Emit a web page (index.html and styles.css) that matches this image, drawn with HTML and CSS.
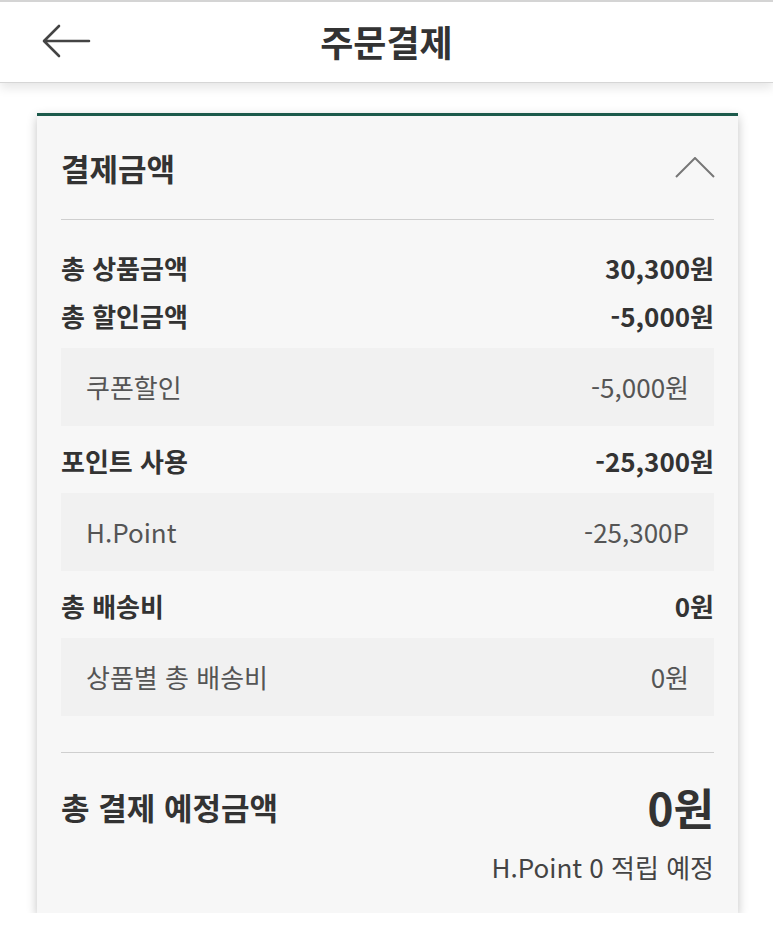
FILE: index.html
```html
<!DOCTYPE html>
<html lang="ko">
<head>
<meta charset="utf-8">
<link rel="stylesheet" href="styles.css">
</head>
<body>
<header class="topbar">
  <svg class="back" width="50" height="34" viewBox="0 0 50 34">
    <path d="M47 17 H3 M17 2 L2 17 L17 32" fill="none" stroke="#444" stroke-width="2.6" stroke-linecap="round" stroke-linejoin="round"/>
  </svg>
  <h1 class="title">주문결제</h1>
</header>
<main class="card">
  <div class="card-head">
    <span class="card-title">결제금액</span>
    <svg class="chev" width="40" height="22" viewBox="0 0 40 22">
      <path d="M1 20 L20 1 L39 20" fill="none" stroke="#777" stroke-width="2"/>
    </svg>
  </div>
  <div class="rows">
    <div class="row"><span>총 상품금액</span><span>30,300원</span></div>
    <div class="row"><span>총 할인금액</span><span>-5,000원</span></div>
    <div class="sub"><span>쿠폰할인</span><span>-5,000원</span></div>
    <div class="row after-sub"><span>포인트 사용</span><span>-25,300원</span></div>
    <div class="sub"><span>H.Point</span><span>-25,300P</span></div>
    <div class="row after-sub"><span>총 배송비</span><span>0원</span></div>
    <div class="sub"><span>상품별 총 배송비</span><span>0원</span></div>
  </div>
  <div class="total">
    <div class="total-row"><span class="total-label">총 결제 예정금액</span><span class="total-value">0원</span></div>
    <div class="earn">H.Point 0 적립 예정</div>
  </div>
</main>
</body>
</html>
```
FILE: styles.css
```css
* { box-sizing: border-box; }
body {
  margin: 0;
  background: #fff;
  font-family: "Noto Sans CJK KR", "Noto Sans", sans-serif;
  color: #333;
}
.topbar {
  position: relative;
  height: 83px;
  border-top: 2px solid #d4d4d4;
  border-bottom: 1px solid #d6d6d6;
  box-shadow: 0 5px 10px rgba(0,0,0,0.1);
  display: flex;
  align-items: center;
  justify-content: center;
  background: #fff;
}
.back {
  position: absolute;
  left: 42px;
  top: 22px;
}
.title {
  margin: 0;
  font-size: 36px;
  line-height: 1.2;
  font-weight: 700;
  color: #333;
}
.card {
  margin: 30px 0 0 37px;
  width: 701px;
  background: #f7f7f7;
  border-top: 3px solid #1c5a4b;
  box-shadow: 0 4px 10px rgba(0,0,0,0.24);
  padding: 0 24px 27px;
}
.card-head {
  height: 104px;
  display: flex;
  align-items: center;
  justify-content: space-between;
  border-bottom: 1px solid #cfcfcf;
}
.card-title {
  font-size: 31px;
  font-weight: 700;
  line-height: 1.2;
}
.chev { margin-right: -1px; }
.rows {
  padding-top: 24px;
  padding-bottom: 36px;
  border-bottom: 1px solid #cfcfcf;
}
.row {
  height: 48px;
  display: flex;
  align-items: center;
  justify-content: space-between;
  font-size: 26px;
  line-height: 1.2;
  font-weight: 700;
}
.row.after-sub { margin-top: 11px; }
.sub {
  margin-top: 8px;
  height: 78px;
  background: #f1f1f1;
  display: flex;
  align-items: center;
  justify-content: space-between;
  padding: 0 25px;
  font-size: 26px;
  line-height: 1.2;
  color: #555;
}
.total { padding-top: 26px; }
.total-row {
  height: 56px;
  display: flex;
  align-items: center;
  justify-content: space-between;
}
.total-label {
  font-size: 31px;
  line-height: 1.2;
  font-weight: 700;
}
.total-value {
  font-size: 44px;
  line-height: 1.2;
  font-weight: 700;
}
.earn {
  margin-top: 13px;
  height: 38px;
  display: flex;
  align-items: center;
  justify-content: flex-end;
  font-size: 26px;
  line-height: 1.2;
  color: #444;
}
```
